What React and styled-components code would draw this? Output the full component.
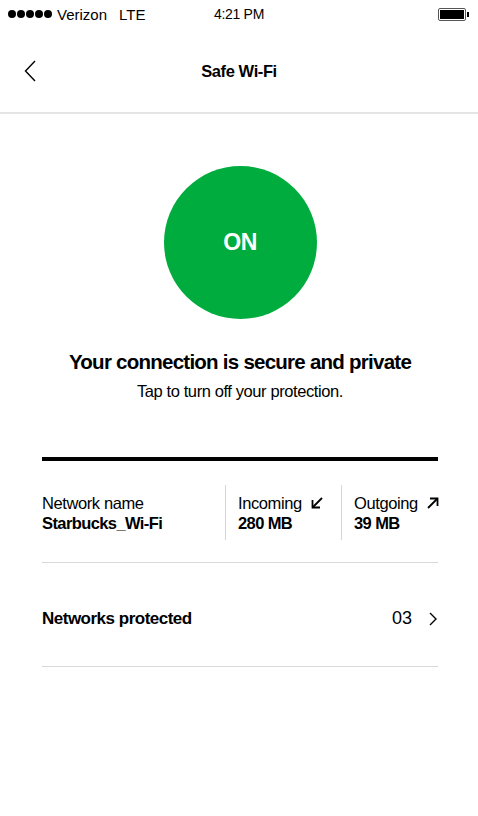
import React from "react";
import styled, { createGlobalStyle } from "styled-components";

const Global = createGlobalStyle`
  html, body { margin: 0; padding: 0; background: #fff; }
  body { font-family: "Liberation Sans", Arial, sans-serif; color: #000; }
`;

const Screen = styled.div`width: 478px; min-height: 816px; background: #fff;`;

const StatusBar = styled.div`
  height: 28px; display: grid; grid-template-columns: 1fr auto 1fr;
  align-items: center; padding: 0 8px; font-size: 15px;
`;
const Carrier = styled.div`display: flex; align-items: center; gap: 5px;`;
const Dots = styled.span`display: flex; gap: 1px;`;
const Dot = styled.i`width: 8px; height: 8px; border-radius: 50%; background: #000; display: block;`;
const Time = styled.div`text-align: center; font-size: 14px; letter-spacing: -0.3px;`;
const BatteryWrap = styled.div`display: flex; justify-content: flex-end; align-items: center; padding-right: 1px;`;
const Battery = styled.div`
  width: 24px; height: 9px; border: 1.5px solid #555; border-radius: 2px; padding: 1px;
  display: flex;
  &::before { content: ""; flex: 1; background: #000; }
`;
const Nub = styled.div`width: 2px; height: 5px; background: #000; margin-left: 1px;`;

const Header = styled.header`
  height: 86px; display: grid; grid-template-columns: 60px 1fr 60px; align-items: center;
  border-bottom: 2px solid #e4e4e4; box-sizing: border-box;
`;
const Back = styled.div`display: flex; padding-left: 24px; padding-top: 2px;`;
const Title = styled.h1`
  margin: 0; text-align: center; font-size: 16.5px; font-weight: 700; letter-spacing: -0.4px; padding-top: 2px;
`;

const Body = styled.main`padding: 0 40px 0 42px; display: flex; flex-direction: column;`;

const Toggle = styled.div`
  align-self: center; margin-top: 52px; width: 153px; height: 153px; border-radius: 50%;
  background: #00ac3e; color: #fff; display: flex; align-items: center; justify-content: center;
  font-size: 23px; font-weight: 700; letter-spacing: -0.4px;
`;
const Headline = styled.h2`
  margin: 31px 0 0; text-align: center; font-size: 20.5px; font-weight: 700; letter-spacing: -0.75px;
  line-height: 24px;
`;
const Sub = styled.p`
  margin: 7px 0 0; text-align: center; font-size: 16.5px; letter-spacing: -0.4px; line-height: 20px;
`;

const ThickRule = styled.div`height: 4px; background: #000; margin-top: 56px;`;

const Stats = styled.div`
  display: grid; grid-template-columns: 183px 116px 1fr; margin-top: 24px; height: 55px;
  border-bottom: 1px solid #d9d9d9; padding-bottom: 22px;
`;
const Stat = styled.div`
  display: flex; flex-direction: column; justify-content: center;
  padding-left: ${p => (p.$first ? "0" : "12px")};
  border-left: ${p => (p.$first ? "none" : "1px solid #d6d6d6")};
`;
const Label = styled.div`
  font-size: 16.5px; letter-spacing: -0.4px; line-height: 20px; display: flex; align-items: center; gap: 9px;
`;
const Value = styled.div`font-size: 16.5px; font-weight: 700; letter-spacing: -0.6px; line-height: 20px;`;

const Row = styled.div`
  display: flex; align-items: center; justify-content: space-between; height: 104px;
  padding-top: 8px; border-bottom: 1px solid #d9d9d9; box-sizing: border-box;
`;
const RowTitle = styled.div`font-size: 17px; font-weight: 700; letter-spacing: -0.5px;`;
const RowEnd = styled.div`display: flex; align-items: center; gap: 17px; font-size: 18px; padding-right: 1px;`;

const Arrow = ({ dir }) => (
  <svg width="12" height="12" viewBox="0 0 12 12" fill="none" stroke="#000" strokeWidth="1.8">
    {dir === "in" ? (
      <>
        <path d="M11 1 L1.5 10.5" />
        <path d="M1.5 3 V10.5 H9" />
      </>
    ) : (
      <>
        <path d="M1 11 L10.5 1.5" />
        <path d="M3 1.5 H10.5 V9" />
      </>
    )}
  </svg>
);

export default function App() {
  return (
    <Screen>
      <Global />
      <StatusBar>
        <Carrier>
          <Dots>{[0, 1, 2, 3, 4].map(i => <Dot key={i} />)}</Dots>
          <span>Verizon</span>
          <span style={{ marginLeft: 7 }}>LTE</span>
        </Carrier>
        <Time>4:21 PM</Time>
        <BatteryWrap><Battery /><Nub /></BatteryWrap>
      </StatusBar>
      <Header>
        <Back>
          <svg width="12" height="22" viewBox="0 0 12 22" fill="none" stroke="#000" strokeWidth="1.4">
            <path d="M11 1 L1.5 11 L11 21" />
          </svg>
        </Back>
        <Title>Safe Wi-Fi</Title>
        <div />
      </Header>
      <Body>
        <Toggle>ON</Toggle>
        <Headline>Your connection is secure and private</Headline>
        <Sub>Tap to turn off your protection.</Sub>
        <ThickRule />
        <Stats>
          <Stat $first>
            <Label>Network name</Label>
            <Value>Starbucks_Wi-Fi</Value>
          </Stat>
          <Stat>
            <Label>Incoming <Arrow dir="in" /></Label>
            <Value>280 MB</Value>
          </Stat>
          <Stat>
            <Label>Outgoing <Arrow dir="out" /></Label>
            <Value>39 MB</Value>
          </Stat>
        </Stats>
        <Row>
          <RowTitle>Networks protected</RowTitle>
          <RowEnd>
            <span>03</span>
            <svg width="8" height="14" viewBox="0 0 8 14" fill="none" stroke="#000" strokeWidth="1.4">
              <path d="M1 1 L7 7 L1 13" />
            </svg>
          </RowEnd>
        </Row>
      </Body>
    </Screen>
  );
}
